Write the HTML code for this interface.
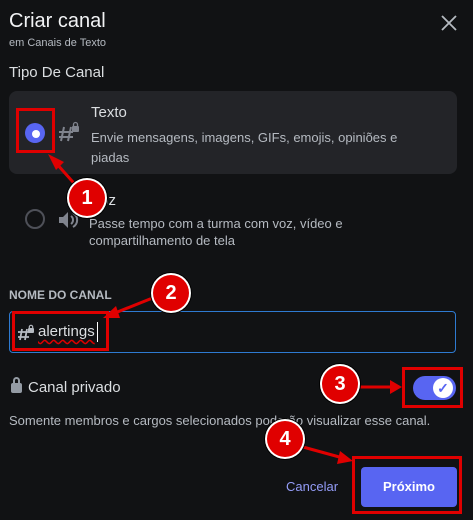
<html><head><style>
body{margin:0;width:473px;height:520px;background:#111214;font-family:"Liberation Sans",sans-serif;color:#dbdee1;position:relative;overflow:hidden}
.a{position:absolute;white-space:nowrap}
.rb{position:absolute;border:3px solid #e00000;box-sizing:border-box}
.n{position:absolute;width:36px;height:36px;border-radius:50%;background:#e00000;color:#fff;font-weight:bold;font-size:20px;text-align:center;line-height:36px;box-shadow:0 0 0 2px #fff,0 0 0 3px #000}
</style></head><body>
<div class="a" style="left:9px;top:10px;font-size:20px;color:#f2f3f5">Criar canal</div>
<div class="a" style="left:9px;top:37px;font-size:11px;color:#b5bac1">em Canais de Texto</div>
<svg class="a" style="left:441px;top:15px" width="16" height="16"><path d="M1 1L15 15M15 1L1 15" stroke="#b5bac1" stroke-width="1.8"/></svg>
<div class="a" style="left:9px;top:64px;font-size:15px;color:#dbdee1">Tipo De Canal</div>
<div class="a" style="left:9px;top:91px;width:448px;height:83px;background:#232428;border-radius:8px"></div>
<div class="a" style="left:25px;top:123px;width:20px;height:20px;border-radius:50%;background:#5865f2"></div>
<div class="a" style="left:32px;top:130px;width:8px;height:8px;border-radius:50%;background:#fff"></div>
<svg class="a" style="left:58px;top:121px" width="22" height="22"><path d="M6 6L3 20M13 6L10 20M1 11H15M1 16H15" stroke="#80848e" stroke-width="2"/><rect x="14" y="5" width="7" height="6" rx="1" fill="#80848e"/><path d="M15.5 5V3.5a2 2 0 0 1 4 0V5" stroke="#80848e" stroke-width="1.3" fill="none"/></svg>
<div class="a" style="left:91px;top:104px;font-size:15px;color:#dbdee1">Texto</div>
<div class="a" style="left:91px;top:128px;font-size:13px;color:#b5bac1;line-height:20px">Envie mensagens, imagens, GIFs, emojis, opiniões e<br>piadas</div>
<div class="a" style="left:25px;top:209px;width:20px;height:20px;border-radius:50%;border:2px solid #4e5058;box-sizing:border-box"></div>
<svg class="a" style="left:57px;top:210px" width="22" height="20"><path d="M2 7H6L11 2V18L6 13H2Z" fill="#80848e"/><path d="M14 6a5 5 0 0 1 0 8M16 3a8 8 0 0 1 0 14" stroke="#80848e" stroke-width="2" fill="none"/></svg>
<div class="a" style="left:91px;top:192px;font-size:15px;color:#dbdee1">Voz</div>
<div class="a" style="left:89px;top:215px;font-size:13px;color:#b5bac1;line-height:17px">Passe tempo com a turma com voz, vídeo e<br>compartilhamento de tela</div>
<div class="a" style="left:9px;top:288px;font-size:12px;font-weight:bold;color:#b5bac1">NOME DO CANAL</div>
<div class="a" style="left:9px;top:311px;width:447px;height:42px;border:1px solid #2e7ad1;border-radius:4px;box-sizing:border-box;background:#111214"></div>
<svg class="a" style="left:17px;top:324px" width="18" height="18"><path d="M5 5L3 16M10 5L8 16M1 8H12M1 13H12" stroke="#b5bac1" stroke-width="1.8"/><rect x="11" y="4" width="6" height="5" rx="1" fill="#b5bac1"/><path d="M12.3 4V3a1.7 1.7 0 0 1 3.4 0V4" stroke="#b5bac1" stroke-width="1.2" fill="none"/></svg>
<div class="a" style="left:38px;top:323px;font-size:15px;color:#dbdee1;text-decoration:underline wavy #d00;text-underline-offset:3px">alertings</div>
<div class="a" style="left:97px;top:322px;width:1px;height:20px;background:#fff"></div>
<div class="a" style="left:11px;top:383px;width:11px;height:10px;background:#949ba4;border-radius:2px"></div>
<div class="a" style="left:13px;top:377px;width:7px;height:8px;border:2px solid #949ba4;border-bottom:none;border-radius:4px 4px 0 0;box-sizing:border-box"></div>
<div class="a" style="left:28px;top:379px;font-size:15px;color:#dbdee1">Canal privado</div>
<div class="a" style="left:413px;top:376px;width:43px;height:24px;border-radius:12px;background:#5865f2"></div>
<div class="a" style="left:433px;top:378px;width:20px;height:20px;border-radius:50%;background:#fff;color:#5865f2;font-size:14px;text-align:center;line-height:20px;font-weight:bold">✓</div>
<div class="a" style="left:9px;top:413px;font-size:13px;color:#b5bac1">Somente membros e cargos selecionados poderão visualizar esse canal.</div>
<div class="a" style="left:286px;top:479px;font-size:13px;color:#949cf7">Cancelar</div>
<div class="a" style="left:361px;top:467px;width:96px;height:40px;border-radius:4px;background:#5865f2;color:#fff;font-size:13px;font-weight:bold;text-align:center;line-height:40px">Próximo</div>
<div class="rb" style="left:16px;top:108px;width:39px;height:45px"></div>
<div class="rb" style="left:12px;top:311px;width:97px;height:40px"></div>
<div class="rb" style="left:402px;top:367px;width:61px;height:41px"></div>
<div class="rb" style="left:352px;top:456px;width:110px;height:58px"></div>
<svg class="a" style="left:0;top:0" width="473" height="520"><g stroke="#e00000" stroke-width="3" fill="#e00000">
<line x1="80" y1="190" x2="56" y2="163"/><polygon points="48,154 64,162 56,170" stroke="none"/>
<line x1="155" y1="297" x2="110" y2="315"/><polygon points="103,318 116,306 120,318" stroke="none"/>
<line x1="358" y1="387" x2="392" y2="387"/><polygon points="402,387 390,380 390,394" stroke="none"/>
<line x1="303" y1="447" x2="343" y2="458"/><polygon points="353,461 340,451 337,464" stroke="none"/>
</g></svg>
<div class="n" style="left:69px;top:180px">1</div>
<div class="n" style="left:153px;top:275px">2</div>
<div class="n" style="left:322px;top:366px">3</div>
<div class="n" style="left:267px;top:421px">4</div>
</body></html>
